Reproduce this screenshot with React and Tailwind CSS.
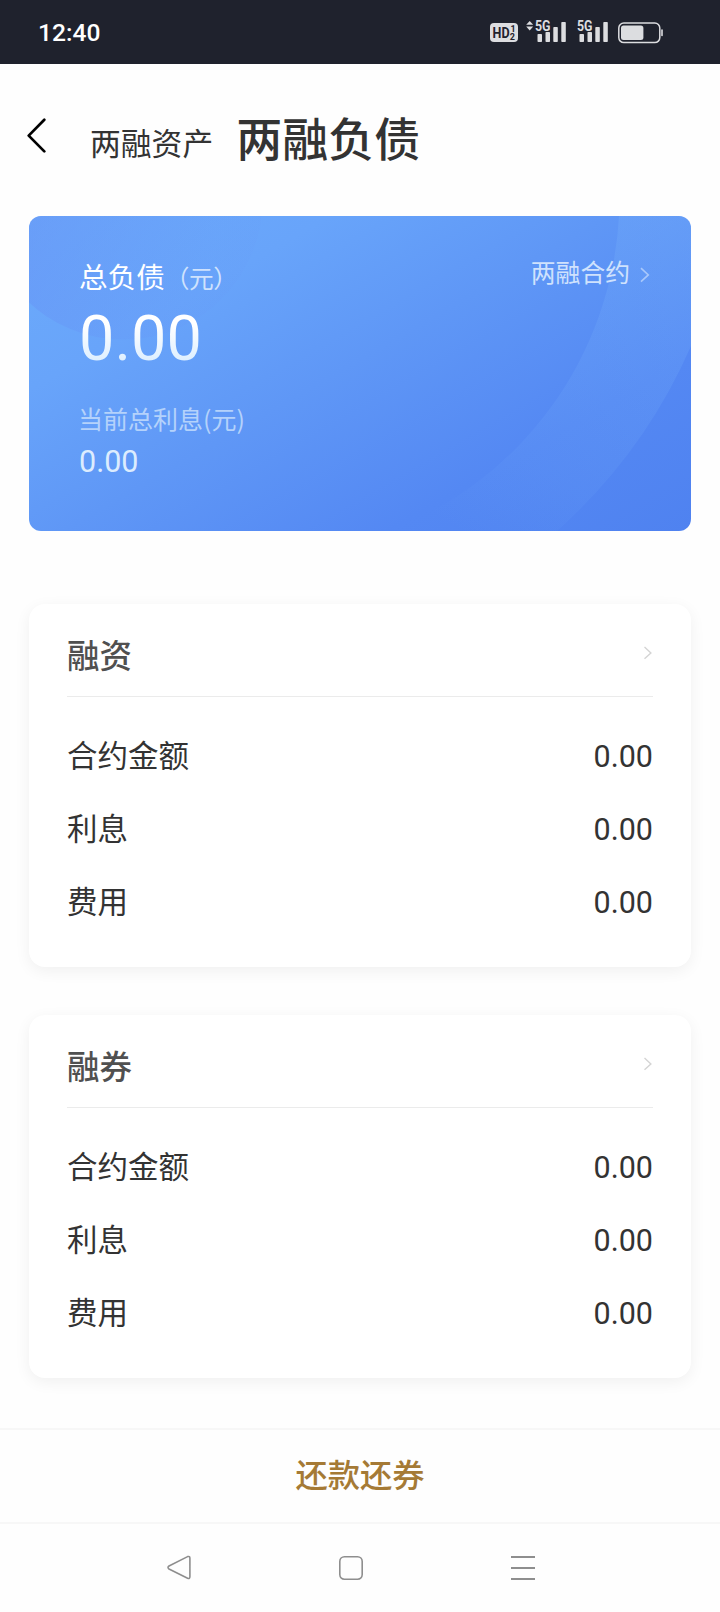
import React from "react";

const sections = [
  {
    title: "融资",
    rows: [
      { label: "合约金额", value: "0.00" },
      { label: "利息", value: "0.00" },
      { label: "费用", value: "0.00" },
    ],
  },
  {
    title: "融券",
    rows: [
      { label: "合约金额", value: "0.00" },
      { label: "利息", value: "0.00" },
      { label: "费用", value: "0.00" },
    ],
  },
];

function Signal({ arrows }) {
  return (
    <svg width="42" height="36" viewBox="0 -6 42 36" fill="#dcdde0">
      {arrows && (
        <>
          <path d="M0.2 4.8 L3.7 0.9 L7.2 4.8 Z" />
          <path d="M0.2 6.6 L3.7 10.5 L7.2 6.6 Z" />
        </>
      )}
      <rect x="11.5" y="14" width="4.5" height="8" rx="0.8" />
      <rect x="19.5" y="12" width="4.5" height="10" rx="0.8" />
      <rect x="27.3" y="7" width="4.5" height="15" rx="0.8" />
      <rect x="35.3" y="2" width="4.5" height="20" rx="0.8" />
      <text x="9" y="11" fontSize="14" fontWeight="700" textLength="15.5" lengthAdjust="spacingAndGlyphs" className="font-['Roboto',sans-serif]">
        5G
      </text>
    </svg>
  );
}

function StatusBar() {
  return (
    <div className="h-16 bg-[#1f222d] flex items-center justify-between pl-[38px] pr-[57px]">
      <span className="pt-px text-[24.6px] leading-[30px] font-medium text-white font-['Roboto',sans-serif]">12:40</span>
      <div className="flex items-center">
        <svg width="28" height="20" viewBox="0 0 28 20" className="mr-[8px] mt-[2px]">
          <rect x="0" y="0" width="28" height="19" rx="4" fill="#dcdde0" />
          <g fill="#1f222d" className="font-['Roboto',sans-serif]" fontWeight="700">
            <text x="2.6" y="14.7" fontSize="15" textLength="17" lengthAdjust="spacingAndGlyphs">HD</text>
            <text x="20.4" y="9" fontSize="9">1</text>
            <text x="19.8" y="17.2" fontSize="9">2</text>
          </g>
        </svg>
        <Signal arrows />
        <Signal />
        <svg width="45" height="22" viewBox="0 0 45 22" fill="none" className="ml-[8px] mt-px">
          <rect x="0.8" y="1" width="41" height="19.6" rx="5" stroke="#dcdde0" strokeWidth="1.5" />
          <rect x="3" y="3.4" width="22.4" height="14.6" rx="2.5" fill="#dcdde0" />
          <rect x="43.2" y="7.3" width="1.6" height="7" rx="0.8" fill="#dcdde0" />
        </svg>
      </div>
    </div>
  );
}

function Header() {
  return (
    <div className="h-[152px] flex items-start text-[#333]">
      <svg width="20" height="36" viewBox="0 0 20 36" fill="none" stroke="#000" strokeWidth="2.7" className="ml-[27px] mt-[54px]" strokeLinecap="round" strokeLinejoin="round">
        <path d="M17.3 1.7 L1.7 17.6 L17.3 33.4" />
      </svg>
      <span className="ml-[43px] mt-[58px] text-[30.8px] leading-10">两融资产</span>
      <span className="ml-[23px] mt-[44px] text-[46px] leading-[56px] font-medium">两融负债</span>
    </div>
  );
}

function Chevron({ className }) {
  return (
    <svg width="10" height="16" viewBox="0 0 10 16" fill="none" stroke="currentColor" strokeWidth="1.6" className={className}>
      <path d="M1 1.2 L8.3 7.9 L1 14.6" />
    </svg>
  );
}

function DebtCard() {
  return (
    <div className="relative mx-[29px] h-[315px] rounded-xl overflow-hidden bg-[linear-gradient(150deg,#6cabfb_0%,#68a4fa_25%,#5f97f6_48%,#5488f3_75%,#4f82f0_100%)] text-white">
      {/* background rings */}
      <svg className="absolute inset-0" width="662" height="315" viewBox="0 0 662 315">
        <defs>
          <linearGradient id="bubble" x1="0.1" y1="0.6" x2="1" y2="0.9">
            <stop offset="0" stopColor="#6690f5" stopOpacity="0.5" />
            <stop offset="0.5" stopColor="#6690f5" stopOpacity="0.22" />
            <stop offset="0.75" stopColor="#6690f5" stopOpacity="0.08" />
            <stop offset="1" stopColor="#6690f5" stopOpacity="0.06" />
          </linearGradient>
          <linearGradient id="ring" gradientUnits="userSpaceOnUse" x1="620" y1="0" x2="430" y2="315">
            <stop offset="0" stopColor="#7ab4fb" stopOpacity="0.27" />
            <stop offset="0.75" stopColor="#7ab4fb" stopOpacity="0.1" />
            <stop offset="1" stopColor="#7ab4fb" stopOpacity="0" />
          </linearGradient>
        </defs>
        <circle cx="94.5" cy="-15.4" r="139" fill="url(#bubble)" />
        <path
          d="M590 0 A358 358 0 0 1 360 315 H528 A535 535 0 0 0 662 130 V0 Z"
          fill="url(#ring)"
        />
      </svg>
      <div className="relative pl-[50px] pr-[41px] pt-[39px]">
        <div className="flex justify-between items-start">
          <div className="flex items-baseline pt-px">
            <span className="text-[28.6px] leading-10">总负债</span>
            <span className="text-[24.7px] leading-10 text-[#cfe2fd] tracking-[-0.4px]">（元）</span>
          </div>
          <div className="flex items-center h-8 text-[#cfe2fd]">
            <span className="text-[24.8px] leading-8">两融合约</span>
            <Chevron className="ml-[10px] mt-[7px] text-[#a9c8fb]" />
          </div>
        </div>
        <p className="mt-[4px] w-fit text-[63px] leading-[76px] font-['Roboto',sans-serif] bg-clip-text text-transparent bg-[linear-gradient(180deg,#fff_30%,#d9edff_85%)]">0.00</p>
        <p className="mt-[23px] -ml-px text-[25px] leading-9 text-[#b4d2fb]">当前总利息(元)</p>
        <p className="mt-[8px] text-[30.5px] leading-9 text-[#dcecfe] font-['Roboto',sans-serif]">0.00</p>
      </div>
    </div>
  );
}

function SectionCard({ title, rows }) {
  return (
    <div className="mx-[29px] h-[363px] rounded-2xl bg-white px-[38px] shadow-[0_4px_16px_rgba(0,0,0,0.06)]">
      <div className="h-[93px] pt-[5px] flex items-center justify-between border-b border-[#ebebeb]">
        <span className="text-[32.5px] leading-10 font-medium text-[#505050] pt-[2px]">{title}</span>
        <Chevron className="text-[#d4d4d4] h-[14px]" />
      </div>
      <div className="pt-[22px] text-[30.5px] text-[#333]">
        {rows.map((row) => (
          <div key={row.label} className="h-[73px] flex items-center justify-between">
            <span className="pb-px">{row.label}</span>
            <span className="pt-[2px] font-['Roboto',sans-serif]">{row.value}</span>
          </div>
        ))}
      </div>
    </div>
  );
}

function NavBar() {
  return (
    <div className="h-[88px] flex justify-between pt-[31px] pl-[167px] pr-[185px]">
      <svg width="24" height="26" viewBox="0 0 24 26" fill="none" stroke="#8e8e8e" strokeWidth="1.6" strokeLinejoin="round">
        <path d="M20.6 1.6 Q22.9 0.9 22.9 3.2 V21.8 Q22.9 24.1 20.6 23.2 L2 14 Q0 12.5 2 11 Z" />
      </svg>
      <svg width="24" height="26" viewBox="0 0 24 26" fill="none" stroke="#8e8e8e" strokeWidth="1.6">
        <rect x="0.8" y="1.8" width="22.4" height="22.4" rx="4.6" />
      </svg>
      <svg width="24" height="26" viewBox="0 0 24 26" fill="none" stroke="#8e8e8e" strokeWidth="2">
        <path d="M0 2 H24 M0 13 H24 M0 24 H24" />
      </svg>
    </div>
  );
}

function App() {
  return (
    <div className="w-[720px] h-[1612px] bg-[#fefefe] overflow-hidden font-['Noto_Sans_CJK_SC',sans-serif]">
      <StatusBar />
      <Header />
      <DebtCard />
      <div className="mt-[73px] flex flex-col gap-12">
        {sections.map((s) => (
          <SectionCard key={s.title} title={s.title} rows={s.rows} />
        ))}
      </div>
      <div className="mt-[50px] h-[96px] border-y-2 border-[#f7f7f7] flex items-center justify-center">
        <button className="pb-[6px] text-[32.3px] leading-10 font-medium text-[#a57a35]">还款还券</button>
      </div>
      <NavBar />
    </div>
  );
}

export default App;
